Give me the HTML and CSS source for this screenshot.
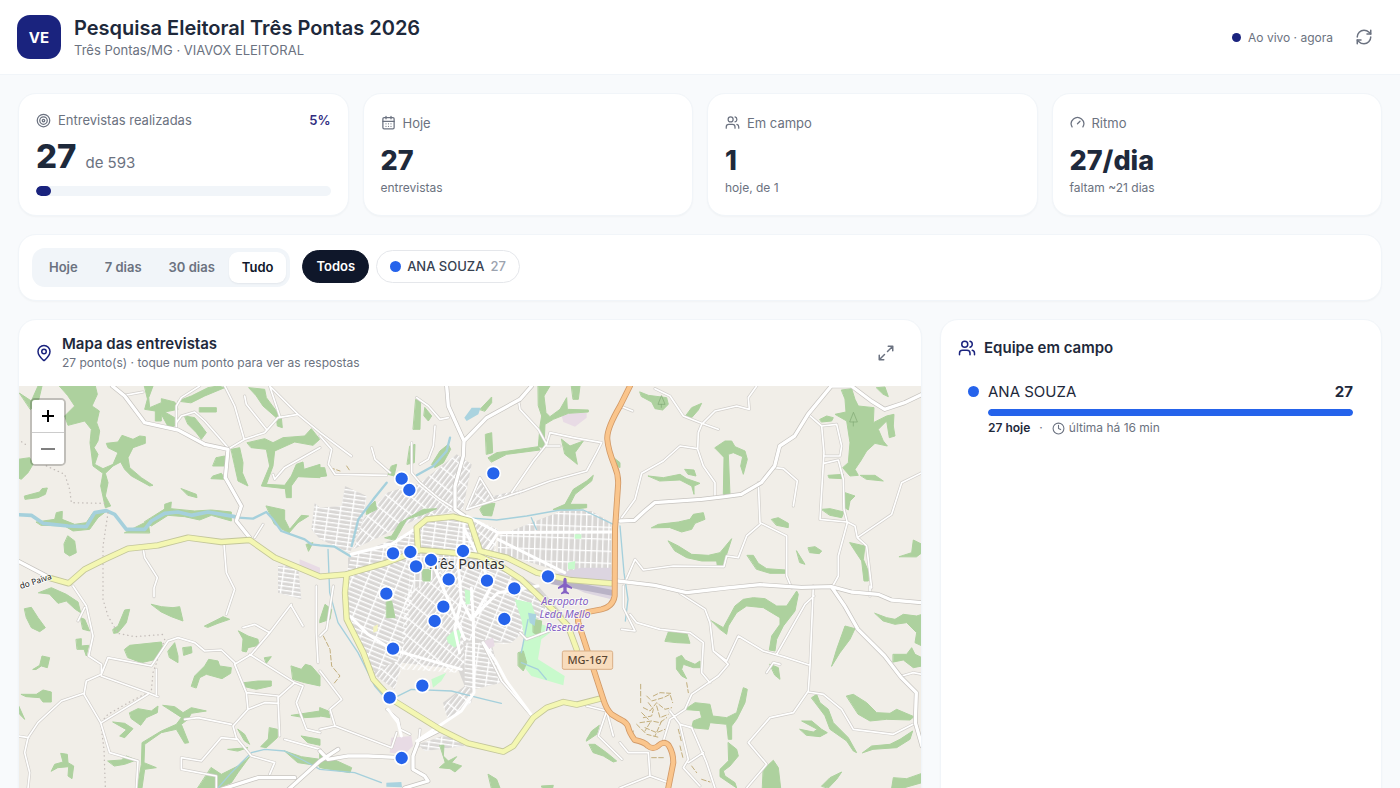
FILE: index.html
```html
<!DOCTYPE html>
<html lang="pt-BR">
<head>
<meta charset="utf-8">
<meta name="viewport" content="width=device-width, initial-scale=1">
<title>Pesquisa Eleitoral Três Pontas 2026</title>
<link rel="stylesheet" href="styles.css">
</head>
<body>
<svg class="sprite" aria-hidden="true">
  <symbol id="i-target" viewBox="0 0 24 24"><circle cx="12" cy="12" r="10"/><circle cx="12" cy="12" r="6"/><circle cx="12" cy="12" r="2"/></symbol>
  <symbol id="i-calendar" viewBox="0 0 24 24"><path d="M8 2v4M16 2v4M3 10h18"/><rect x="3" y="4" width="18" height="18" rx="2"/><path d="M8 14h.01M12 14h.01M16 14h.01M8 18h.01M12 18h.01M16 18h.01"/></symbol>
  <symbol id="i-users" viewBox="0 0 24 24"><path d="M16 21v-2a4 4 0 0 0-4-4H6a4 4 0 0 0-4 4v2"/><circle cx="9" cy="7" r="4"/><path d="M22 21v-2a4 4 0 0 0-3-3.87M16 3.13a4 4 0 0 1 0 7.75"/></symbol>
  <symbol id="i-gauge" viewBox="0 0 24 24"><path d="m12 14 4-4M3.34 19a10 10 0 1 1 17.32 0"/></symbol>
  <symbol id="i-refresh" viewBox="0 0 24 24"><path d="M3 12a9 9 0 0 1 9-9 9.75 9.75 0 0 1 6.74 2.74L21 8"/><path d="M21 3v5h-5"/><path d="M21 12a9 9 0 0 1-9 9 9.75 9.75 0 0 1-6.74-2.74L3 16"/><path d="M8 16H3v5"/></symbol>
  <symbol id="i-pin" viewBox="0 0 24 24"><path d="M20 10c0 4.993-5.539 10.193-7.399 11.799a1 1 0 0 1-1.202 0C9.539 20.193 4 14.993 4 10a8 8 0 0 1 16 0"/><circle cx="12" cy="10" r="3"/></symbol>
  <symbol id="i-expand" viewBox="0 0 24 24"><path d="M15 3h6v6M21 3l-7 7M3 21l7-7M9 21H3v-6"/></symbol>
  <symbol id="i-clock" viewBox="0 0 24 24"><circle cx="12" cy="12" r="10"/><path d="M12 6v6l4 2"/></symbol>
  <symbol id="i-plus" viewBox="0 0 14 14"><path d="M7 1v12M1 7h12"/></symbol>
  <symbol id="i-minus" viewBox="0 0 14 14"><path d="M0 7h14"/></symbol>
</svg>

<header class="topbar">
  <div class="logo">VE</div>
  <div class="heading">
    <h1>Pesquisa Eleitoral Três Pontas 2026</h1>
    <p>Três Pontas/MG · VIAVOX ELEITORAL</p>
  </div>
  <div class="live"><span class="dot dot-live"></span>Ao vivo · agora</div>
  <button class="icon-button" type="button" aria-label="Atualizar"><svg class="icon icon-md"><use href="#i-refresh"/></svg></button>
</header>

<main class="content">
  <section class="stats">
    <article class="card stat stat-main">
      <div class="stat-label"><svg class="icon"><use href="#i-target"/></svg>Entrevistas realizadas<strong class="percent">5%</strong></div>
      <div class="stat-total"><strong>27</strong><span>de 593</span></div>
      <div class="progress"><div class="progress-fill" style="width:5%"></div></div>
    </article>
    <article class="card stat">
      <div class="stat-label"><svg class="icon"><use href="#i-calendar"/></svg>Hoje</div>
      <strong class="stat-value">27</strong>
      <span class="stat-note">entrevistas</span>
    </article>
    <article class="card stat">
      <div class="stat-label"><svg class="icon"><use href="#i-users"/></svg>Em campo</div>
      <strong class="stat-value">1</strong>
      <span class="stat-note">hoje, de 1</span>
    </article>
    <article class="card stat">
      <div class="stat-label"><svg class="icon"><use href="#i-gauge"/></svg>Ritmo</div>
      <strong class="stat-value">27/dia</strong>
      <span class="stat-note">faltam ~21 dias</span>
    </article>
  </section>

  <section class="card filters">
    <div class="segment">
      <button type="button">Hoje</button>
      <button type="button">7 dias</button>
      <button type="button">30 dias</button>
      <button type="button" class="is-active" aria-pressed="true">Tudo</button>
    </div>
    <div class="chips">
      <button type="button" class="chip is-active" aria-pressed="true">Todos</button>
      <button type="button" class="chip"><span class="dot dot-person"></span>ANA SOUZA<span class="chip-count">27</span></button>
    </div>
  </section>

  <div class="panels">
    <section class="card map-card">
      <div class="map-head">
        <svg class="icon icon-brand icon-pin"><use href="#i-pin"/></svg>
        <div class="map-title">
          <h2>Mapa das entrevistas</h2>
          <p>27 ponto(s) · toque num ponto para ver as respostas</p>
        </div>
        <button class="icon-button" type="button" aria-label="Expandir mapa"><svg class="icon icon-md"><use href="#i-expand"/></svg></button>
      </div>
      <div class="map">
        <svg class="map-canvas" viewBox="0 0 2712 1400" role="img" aria-label="Mapa de Três Pontas">
          <defs>
            <pattern id="grid-a" width="42" height="13" patternUnits="userSpaceOnUse" patternTransform="rotate(-52)"><path d="M0 0H42M0 0V13" class="street"/></pattern>
            <pattern id="grid-b" width="44" height="14" patternUnits="userSpaceOnUse" patternTransform="rotate(22)"><path d="M0 0H44M0 0V14" class="street"/></pattern>
            <pattern id="grid-c" width="17" height="36" patternUnits="userSpaceOnUse" patternTransform="rotate(2)"><path d="M0 0H17M0 0V36" class="street"/></pattern>
            <pattern id="grid-d" width="36" height="13" patternUnits="userSpaceOnUse" patternTransform="rotate(8)"><path d="M0 0H36M0 0V13" class="street"/></pattern>
            <g id="minor">
              <path d="M320 28L375 18M475 125V60L490 35 545 0M475 110L490 90 530 78 560 105 630 185M620 0L650 60 678 158M630 190L680 160 740 140 780 95 840 85 906 140 1000 210M680 30L685 55 745 130M755 0L785 90M755 0L840 85M765 265L770 280 800 245 906 185M735 415L710 455M375 485L380 515 418 575 408 606V632M618 475L625 560 650 610 625 685"/>
              <g transform="translate(906 0)"><path d="M290 35L325 60 360 100 385 95M345 120L340 180 325 220 300 235M275 170V260L300 290 360 340 440 390M155 185L165 220 210 260M0 150L35 190 25 235 45 265 200 268M595 40L600 70 655 130 680 175 640 225 575 320M680 175L690 140 760 155 845 170 830 200 800 255 690 285 610 315 440 370M680 180H720M440 370L480 275 520 340"/></g>
              <g transform="translate(1806 0)"><path d="M105 8L150 30 190 90 245 112M245 115L285 75 350 60 388 70 385 35 410 0M245 112L295 130M245 115L235 140 233 190 250 240 285 290 285 330M233 188L180 180 130 225 65 262 45 340 5 395M0 60L38 75M565 85L605 120 612 200 600 400 680 408M605 120L650 115 665 180 660 210 615 210M612 232L655 222 670 280 672 370 682 410 655 510 655 570 635 606M465 245L490 248 532 285 520 360M415 290L420 410 500 450V570L515 606M420 415L380 450 355 515 320 510 312 542 160 540 70 552 45 520 15 590M682 408L705 420 712 455 740 480 755 606M712 455L815 385 845 290 906 260"/></g>
              <g transform="translate(0 600)"><path d="M165 0L205 60 225 150 212 210 250 235 250 265 205 285 198 325 248 410 275 500 360 525 355 606M200 65L180 105M250 265L270 215 400 240 450 165 480 155 530 170 560 195 610 192 650 230M250 270L390 320 420 332M415 250V325M198 322L130 345 60 410 30 455 20 500 35 560 30 606M0 450L32 455M250 410L390 325M820 55L755 140 700 205 650 235 685 320 690 370 645 420 655 455 700 510 770 530 755 565M755 140L710 115 675 125M820 60L855 120M695 205L830 290 780 335 785 450M685 320L780 330M690 370L740 350 782 352M830 290L855 300 835 350 865 430 906 440M640 415L540 395 500 400M660 460L610 455 550 525 490 515 490 550 595 570 595 606M895 0V140L900 230M800 460L906 490"/></g>
              <g transform="translate(906 600)"><path d="M0 255L65 340 30 370 45 420 215 485 230 440M0 430L45 420M200 370L235 400 240 430 270 445M300 430L295 480M490 175L545 285 640 395M600 140L620 160 700 130M800 360L860 375 835 450 906 520M860 375L880 450M40 0L20 130 0 150"/></g>
              <g transform="translate(1806 600)"><path d="M30 85L50 110 120 130 210 140 250 170 245 260 270 290M180 22L255 70 270 110 280 195 325 235 295 270 215 325 195 370 150 400 130 465M280 195L320 225 355 150 430 195 490 212 570 238M580 0L570 240 565 315 520 380 450 395 385 470 440 535 380 606M470 205L555 55 582 30M440 260L460 230 480 235M565 318L610 325 665 370 700 430 820 445 885 412M845 270L880 260 906 265M150 375L180 415 215 425 260 530 285 606M180 415L205 520 190 545 240 600M205 530L250 500M0 470L25 500 85 500 90 570 0 606M90 570L145 590M10 0V65L45 135 5 130M750 0V30"/></g>
            </g>
            <g id="roads">
              <path d="M283 0L320 30 380 110 480 132 560 175 630 190 622 275 670 360 655 405 695 455M0 525L95 575"/>
              <path d="M1286 0L1291 60 1338 165 1336 210 1311 300 1311 370 1346 395M1338 165L1406 95 1506 40 1541 0"/>
              <path d="M1806 405L1850 403 1880 375 1910 350 2050 340 2120 332 2170 325 2230 290 2270 240 2285 180 2330 150 2370 85 2440 0H2500L2560 45 2600 70 2660 50 2712 25"/>
              <path d="M1800 585L1910 598 2006 620 2126 606 2226 596 2350 604 2440 602 2500 618 2580 625 2620 642 2712 650M2440 602L2480 660 2520 730 2600 810 2650 875 2695 920 2692 1010 2712 1080"/>
              <path d="M610 1210L720 1175 830 1175M812 1210L906 1125 960 1090M906 1095L930 1120 990 1110 1050 1110 1150 1115M1200 1070L1185 1110 1185 1150 1220 1170 1230 1185 1160 1206M1200 1065L1270 1030"/>
            </g>
            <g id="avenues">
              <path d="M1346 390L1440 440 1780 438M1360 606L1366 700 1368 920 1330 975 1196 1065M1338 395V470L1320 530 1330 640 1360 700M996 690L1050 745 1120 790 1330 850M1395 770L1430 820 1465 885 1546 995M1000 505L1120 475 1190 430M1340 430L1380 510 1420 600 1370 690M1440 440L1400 500M1440 460L1640 560M1110 970L1140 1010 1150 1050M1230 500L1290 640 1340 760M1330 640L1310 730 1325 800M1400 500L1440 440M1370 690L1440 620 1560 600"/>
            </g>
            <g id="secondary">
              <path d="M92 575L152 592 200 550 260 520 330 488 420 478 510 455 610 468 695 462 770 515 906 572 986 565 1106 530 1206 492 1300 500 1380 510 1440 535 1510 580 1606 672 1650 720 1676 790"/>
              <path d="M1200 492L1196 425 1226 400 1306 392 1356 405 1386 495 1466 515 1556 560 1656 582 1780 592M986 565L981 620 986 700 1036 800 1066 880 1121 940 1266 1030 1350 1072 1456 1097 1486 1080 1546 995 1586 965 1636 948 1676 956 1746 938"/>
            </g>
            <g id="trunk">
              <path d="M1836 0L1806 60Q1765 130 1768 160 1770 190 1790 240 1803 270 1800 300L1791 430 1790 630Q1785 662 1750 670L1700 680Q1676 685 1681 710L1756 940Q1765 970 1781 985L1806 1000Q1828 1010 1831 1025T1850 1062Q1880 1068 1890 1080 1905 1092 1920 1080 1938 1062 1952 1078 1966 1100 1966 1130L1950 1210"/>
            </g>
          </defs>

          <rect class="land" width="2712" height="1400"/>

          <g class="built">
            <path d="M1206 290L1316 205 1361 235 1335 370 1196 400 1006 490 1036 400 1106 320z"/>
            <path d="M906 365L970 360 981 300 1046 330 1036 400 996 500 906 460 880 430 890 350z"/>
            <path d="M990 515L1200 430 1226 400 1330 390 1440 430 1420 520 1560 600 1640 690 1560 700 1480 770 1420 770 1450 890 1370 910 1360 950 1290 1000 1275 950 1340 900 1320 850 1150 830 1130 910 1060 860 990 720z"/>
            <path d="M1440 450L1630 375 1720 375 1780 410V585L1640 560 1440 500z"/>
            <path d="M1350 350L1386 275 1426 330 1516 308V322L1386 360 1350 375z"/>
            <path d="M780 540L840 540 850 640 780 620z"/>
            <path d="M1200 1075L1290 1045 1340 1080 1220 1095z"/>
          </g>
          <path fill="url(#grid-a)" d="M1206 290L1316 205 1361 235 1335 370 1196 400 1006 490 1036 400 1106 320zM1350 350L1386 275 1426 330 1516 308V322L1386 360 1350 375zM1060 860L1150 820 1330 840 1320 860 1150 850 1130 910zM1160 630L1320 520 1340 840 1150 820zM1275 960L1340 900 1360 910V950L1290 1000zM1350 390L1440 430 1430 520 1370 500z"/>
          <path fill="url(#grid-b)" d="M985 565L1200 500 1180 640 1150 820 1060 860 990 720zM1320 520L1430 520 1640 690 1560 700 1480 770 1370 760 1330 770z"/>
          <path fill="url(#grid-d)" d="M906 365L970 360 981 300 1046 330 1036 400 996 500 906 460 880 430 890 350zM1000 510L1200 430V500L985 560zM1210 425L1226 400 1350 390 1370 510 1200 490zM780 540H840L850 640 780 620zM1340 770L1480 770 1420 780 1450 890 1370 910 1340 900zM1200 1075L1290 1045 1340 1080 1220 1095z"/>
          <path fill="url(#grid-c)" d="M1440 450L1630 375 1720 375 1780 410V585L1640 560 1440 500zM1180 500L1320 510 1320 530 1170 630z"/>

          <path class="pink" d="M1631 90L1646 82 1706 80 1706 95 1671 122 1636 108zM1120 1055L1180 1050 1185 1080 1160 1105 1115 1100zM1400 765L1425 755 1430 780 1410 790zM845 520L906 545V580L845 540z"/>
          <path class="apron" d="M1590 570L1690 545 1780 545V640L1700 620z"/>
          <path class="runway" d="M1600 585L1780 620"/>
          <path class="park" d="M1490 640L1540 650 1560 710 1610 730 1570 760 1560 820 1640 870 1636 898 1540 870 1500 820 1520 760 1510 700zM1285 755L1305 735 1330 730 1325 770 1310 785 1290 770zM1340 610L1358 615 1355 655 1343 655zM1240 880L1285 860 1270 885 1245 905zM1650 530L1672 525 1670 550 1650 550zM1670 445H1690V458H1670z"/>
          <path class="sand" d="M1066 722L1080 715 1078 735 1066 740z"/>

          <g class="wood">
            <path d="M125 0H232L238 25 222 60 244 75 236 110 245 135 240 165 228 185 240 205 230 235 255 248 285 235 300 200 270 185 265 172 300 168 312 148 345 160 365 150 382 152V172L345 185 330 215 335 245 370 275 405 298 395 300 340 270 320 250 308 228 285 240 262 262 270 290 262 330 278 360 262 365 248 300 255 262 225 240 216 170 220 130 200 105 150 118 140 90 170 60 150 30zM5 22L40 45 60 0H72L60 50 38 70zM0 220L35 215 45 235 30 260 10 280 0 275zM20 330L65 318 72 308 88 306 82 325 60 335 22 340zM490 308L535 325 537 335 510 328zM150 450L170 465 175 500 155 510 140 500 138 475z"/>
            <path d="M55 408L110 400 115 380 133 376 132 400 170 415 205 410 225 380 245 375 262 378 240 395 215 430 165 435 140 420 70 418zM320 440L350 425 390 405 395 440zM440 368V355L460 348 458 368 530 375 580 372 640 378V405L580 388 545 402 500 392 450 388 400 420 380 408zM380 0H405L392 35 395 65 430 50 430 38 470 48 480 70 440 78 470 95V120L452 125 430 85 430 105 412 105V75L380 70 388 40zM480 45L520 30 570 5 600 0 620 5 560 30 520 50zM545 65H595V78H545zM500 90L530 95 550 120 565 140 550 160 535 140 510 115zM693 5L740 10 745 35 790 95 793 125 778 120 775 95 735 60 715 30z"/>
            <path d="M640 190L665 185 675 230 673 260 690 300 660 285 650 240zM595 215L620 210 622 240 585 240zM585 270L610 262 622 280 580 278zM688 170L740 158 765 170 795 155 860 150 880 128 905 160 885 178 830 168 770 195 765 240 745 295 800 298 820 270 835 235 855 228 858 250 906 235V275L840 272 820 300V335L805 335 802 308 730 300 755 240 745 190 700 185zM745 360L800 372V400L815 430 850 388 872 390 840 410 812 442 770 415zM906 245H920L926 270 906 272zM865 475L885 470 872 495z"/>
            <g transform="translate(906 0)"><path d="M288 40H302L300 130 280 130zM315 65L335 90 325 105 312 90zM270 180L285 175 283 230 262 235zM335 235L360 195 385 175 392 190 370 230 345 245zM480 70L515 33V50L495 75zM497 145L515 140 518 200 500 205zM505 215L530 200 600 190 655 182 660 192 560 205 515 228zM655 0H690L672 30 678 80 690 92 720 70 740 35 742 70 805 72V78L745 82 700 100 675 115 672 185 655 182 660 120 665 90 655 60zM755 0H780L775 40 760 40zM725 160L750 180 790 165 765 200 772 235 735 205zM875 210L900 230V245L880 235zM700 370L735 355 760 310 800 285 820 268 815 285 765 325 750 355 800 355V365L740 372zM480 370L490 355 525 352 515 390 490 388zM215 240L230 235 222 270 205 265zM195 455L215 450 240 410 310 370 350 368 310 385 260 400 235 445 225 462zM140 370L165 345 170 370 140 385zM307 550H332L330 585H310z"/></g>
            <g transform="translate(1806 0)"><path d="M60 18L85 28 140 35 145 55 128 72 105 68 95 48 65 32zM195 92L215 65 245 52 235 72 215 95zM285 185L315 165H335L345 182 375 195 382 220 370 265 362 240 368 212 340 200 325 205 330 325H310L312 215zM85 270L130 275 180 265 200 278 240 292 222 300V325L215 300 180 282 120 285zM195 250L222 252 228 270 205 265zM95 425L115 415 175 408 210 400 220 385 250 380 255 400 225 412 215 430 185 438 150 425zM145 465L175 480 215 505 265 508 300 500 335 458 325 490 308 540 292 540 290 525 245 525 200 515 165 495zM382 508H400L415 532 440 548 497 552V562L450 562 410 550zM455 400L475 395 505 412V425L470 418zM530 495L555 535 540 530zM565 485L585 482 605 495 598 503 570 500zM600 100L620 90 640 95 635 105 605 108zM665 12L695 8 705 40 715 60 762 65 760 110 800 90 822 85 820 120 825 150 808 155 800 105 775 130 790 165 802 180 765 172 740 195 722 225 705 250 715 268 690 270 668 245 685 230 690 170 680 105 645 85 678 78 675 40zM625 268L670 265 668 278 628 276zM722 268L765 268 790 285 740 280zM770 5L795 3 805 32 790 25zM605 370L630 368 672 378 665 395 630 388zM675 320L705 330 690 345 685 372 675 365zM690 470L735 480 730 520 745 555V585H732L725 525 705 495zM838 512L875 500 880 462 906 475V500L890 512z"/></g>
            <g transform="translate(0 600)"><path d="M62 20L100 5 145 25 180 48 188 80 172 70 145 45 120 52 95 25zM20 68L40 64 60 95 82 125 65 137 40 125 25 95zM188 95L200 100 215 135 195 130zM175 160L190 158V180L212 178 205 210 198 190 178 190zM285 130L300 120 320 72 335 70 325 110 300 140 288 142zM400 55L430 62 465 65 485 62 495 105 460 92 430 78zM560 120L600 100 615 92 635 100 600 112 570 124zM662 135L690 150 720 160 722 178 690 185 685 198 672 195 675 160zM320 190L335 178 430 168 435 190 415 220 370 230 330 215zM450 195L470 170 480 210 480 230 455 215zM495 185L520 182 522 200 498 208zM520 300L530 270 560 240 572 220 600 225 605 240 640 245 638 262 612 278 565 265 545 275 535 305zM740 215L760 212 745 232zM45 250L65 238 72 210 95 215 88 245 70 240 55 250zM10 325L55 325 75 312 100 318V348L75 348 65 335 25 332zM335 380L360 368 400 375 420 360 418 380 385 395 368 418 340 398z"/><path d="M285 408L320 412 345 428 320 455 305 450 325 432zM435 358L470 362 495 380 520 365 565 375 520 382 510 400 490 415 512 470 500 472 475 430 430 440 380 475 378 530 415 545 380 550 372 606 358 606 370 535 372 470 430 435 475 415 490 395zM270 525L310 522 325 510 355 522 320 535 290 540zM100 555L110 535 135 528 128 502 148 505 150 530 167 540 162 578 150 570 152 542 120 545zM660 430L680 445 695 475 680 465zM630 490L690 485 660 495zM755 425L778 430V455L745 485 728 482 750 460zM678 290L720 285 760 285V300L715 310 680 302zM820 240L850 250 862 235 880 240 906 270V300L860 290 825 280zM820 388L906 375V392L860 395zM850 450L906 460V478L870 470zM800 495L850 512 906 520V540L840 530zM580 545L610 565 660 540 695 512 660 560 640 590 600 606 540 606zM0 355L20 400 5 385z"/></g>
            <g transform="translate(906 600)"><path d="M0 100L15 55 35 70 30 100 0 110zM200 45L215 45 225 95H200zM0 365L25 375 30 395 0 390zM0 500L40 520 95 545 90 560 0 545zM360 478L372 478 370 510 385 525 410 512 395 530 425 540 405 558 390 548 358 545 375 530zM505 565L530 580 540 606 515 606zM595 200L610 195 620 230 610 255 595 240zM640 100L665 105 660 150 640 140zM800 460L815 435 838 418 830 445 800 465zM808 475L825 475 860 500 890 525 880 528 850 510 820 500zM665 600L700 598 698 606 668 606z"/></g>
            <g transform="translate(1806 600)"><path d="M135 165L145 138 200 140 210 172 170 170zM275 105L310 125 345 60 370 40 400 35 435 38 470 60 500 60 530 15 535 25 525 75 490 120 470 160 465 195 448 192 455 150 480 115 480 95 430 65 380 60 350 80 325 120 320 145 300 130zM170 215L185 208 195 222 225 235 240 225 240 245 220 245 190 235 185 250 200 278 185 270 170 250zM195 370L225 350 270 355 278 390 320 395 350 380 370 305 382 310 375 350 350 400 335 420 335 460 325 460 320 415 270 410 265 430 215 425 220 405 245 395 240 375zM325 470L350 490 355 510 330 540 310 555 315 570 345 590 350 606 300 572 300 550 325 525zM430 550L460 523 475 545 482 606H428zM605 600L630 575 665 558 650 580 625 606zM635 240L650 190 675 120 705 128 690 160 675 180 660 200zM765 82L800 95 825 100 850 85 890 90 906 85V180L885 170 890 140 860 110 825 115 790 105zM820 205L860 205 875 185 885 205 906 215V240L880 245 850 222 820 228zM575 335L590 325 600 350 625 370 640 410 685 455 710 500 700 495 680 465 630 430 615 390zM680 330L700 325 740 350 770 380 810 382 830 370 882 392 870 402 800 400 750 405 715 385zM450 235L475 245 480 280 465 268zM540 430L580 438 592 430 545 405 575 405 605 430 622 440 600 452 560 448zM728 500L755 480 810 475 840 460 878 435 870 460 830 485 760 490zM815 606L820 575 860 578 906 562V590L850 606z"/></g>
          </g>

          <g class="water">
            <path class="river" d="M0 386L40 388 75 412 150 420 205 422 230 380 265 374 290 385 325 430 380 430 400 405 440 382 480 378 520 388 570 378 650 392"/>
            <path class="brook" d="M650 394L705 398 745 378 765 400 790 435 860 460 880 475 906 478 950 482 996 510M1296 155L1286 195 1246 240 1196 268M1106 290L1066 340 1021 400 1001 480"/>
            <path class="stream" d="M1346 395L1436 402 1526 390 1626 372 1696 372 1786 415M1540 395L1555 430M930 490L935 620 960 710 1020 800 1070 900 1100 935 1130 935 1180 910 1300 915 1400 940 1450 952M1806 420L1818 560 1830 640 1822 705M600 1206L640 1160 700 1100 740 1090 800 1095 860 1125 906 1150 1010 1160 1090 1190M1510 830L1560 850 1585 880M1530 700L1520 750 1510 800"/>
            <path class="pond" d="M1339 95L1361 65 1388 65 1381 85 1346 105zM1530 680L1555 685 1550 720 1535 710zM1105 1190L1150 1188 1152 1204 1105 1202z"/>
          </g>

          <g class="trail">
            <path d="M0 160L22 175M85 240L140 265 155 310 160 350 265 352M270 380L255 480V640L270 690 300 742 350 752 440 745M440 760L405 860 400 915 340 945 270 985 248 1010 258 1090 262 1206"/>
          </g>
          <g class="track">
            <path d="M30 245L60 255M80 240L90 255M100 268H200" transform="translate(906 0)"/>
            <path d="M10 150L30 190 35 240 60 270 40 295" transform="translate(906 600)"/>
            <path transform="translate(1806 600)" d="M62 295V350M80 330L95 345 130 335 150 325 158 350M70 365L90 375 110 350 135 370 155 365M85 350L100 370 95 390 70 395M110 360L120 395 145 385M60 410L95 405 120 410 140 395M75 425L110 440 135 430M50 415L80 445 120 455M90 410L75 435M125 405L105 450M100 330L120 320 152 322M65 380L85 400M200 290L205 320M175 430L185 470M180 480L190 520M95 515H135M215 540L230 560M245 580L270 588M40 435L35 450"/>
          </g>

          <use href="#minor" class="minor-case"/><use href="#minor" class="minor-fill"/>
          <use href="#roads" class="road-case"/><use href="#roads" class="road-fill"/>
          <use href="#avenues" class="avenue-fill"/>
          <use href="#secondary" class="secondary-case"/><use href="#secondary" class="secondary-fill"/>
          <use href="#trunk" class="trunk-case"/><use href="#trunk" class="trunk-fill"/>

          <path class="tree" d="M1930 30L1920 55H1940zM1930 55V64M2506 80L2495 108H2517zM2506 108V120"/>
          <path class="plane" d="M1641 575q5 0 5 10v8l16 11v5l-16-5v11l7 6v4l-12-3-12 3v-4l7-6v-11l-16 5v-5l16-11v-8q0-10 5-10z"/>
          <text class="label-road" transform="translate(8 609) rotate(-18)">do Paiva</text>
          <text class="label-town" x="1343" y="549">Três Pontas</text>
          <text class="label-air"><tspan x="1641" y="656">Aeroporto</tspan><tspan x="1641" y="695">Leda Mello</tspan><tspan x="1641" y="734">Resende</tspan></text>
          <rect class="shield" x="1633" y="795" width="151" height="55" rx="5"/>
          <text class="label-shield" x="1709" y="834">MG-167</text>

          <g class="pins">
            <circle cx="1151" cy="278" r="21"/><circle cx="1174" cy="312" r="21"/><circle cx="1426" cy="262" r="21"/>
            <circle cx="1125" cy="502" r="21"/><circle cx="1177" cy="498" r="21"/><circle cx="1194" cy="541" r="21"/>
            <circle cx="1239" cy="522" r="21"/><circle cx="1335" cy="495" r="21"/><circle cx="1292" cy="580" r="21"/>
            <circle cx="1407" cy="584" r="21"/><circle cx="1489" cy="607" r="21"/><circle cx="1590" cy="571" r="21"/>
            <circle cx="1105" cy="623" r="21"/><circle cx="1276" cy="662" r="21"/><circle cx="1250" cy="705" r="21"/>
            <circle cx="1459" cy="699" r="21"/><circle cx="1125" cy="788" r="21"/><circle cx="1213" cy="899" r="21"/>
            <circle cx="1115" cy="935" r="21"/><circle cx="1151" cy="1116" r="21"/>
          </g>
        </svg>
        <div class="zoom">
          <button type="button" aria-label="Aproximar"><svg class="zoom-plus"><use href="#i-plus"/></svg></button>
          <button type="button" aria-label="Afastar"><svg class="zoom-minus"><use href="#i-minus"/></svg></button>
        </div>
      </div>
    </section>

    <aside class="card team">
      <h2><svg class="icon icon-brand icon-team"><use href="#i-users"/></svg>Equipe em campo</h2>
      <div class="member">
        <span class="dot dot-person"></span>
        <div class="member-body">
          <div class="member-row"><span>ANA SOUZA</span><strong>27</strong></div>
          <div class="member-bar"><div class="member-fill" style="width:100%"></div></div>
          <div class="member-meta"><strong>27 hoje</strong><span>·</span><span class="last"><svg class="icon icon-sm"><use href="#i-clock"/></svg>última há 16 min</span></div>
        </div>
      </div>
    </aside>
  </div>
</main>
</body>
</html>
```
FILE: styles.css
```css
* { box-sizing: border-box; }
body {
  margin: 0;
  height: 100vh;
  display: flex;
  flex-direction: column;
  background: #f8fafc;
  color: #1e293b;
  font-family: Inter, "Liberation Sans", sans-serif;
  font-size: 13px;
}
h1, h2, p { margin: 0; }
button { font: inherit; color: inherit; border: 0; padding: 0; background: none; cursor: pointer; }
.sprite { display: none; }
.icon { width: 15px; height: 15px; flex: none; fill: none; stroke: currentColor; stroke-width: 2; stroke-linecap: round; stroke-linejoin: round; }
.icon-sm { width: 13px; height: 13px; }
.icon-md { width: 18px; height: 18px; }
.icon-pin, .icon-team { width: 18px; height: 18px; }
.icon-brand { color: #1a237e; }
.dot { flex: none; border-radius: 50%; }
.dot-live { width: 9px; height: 9px; background: #1a237e; }
.dot-person { width: 11px; height: 11px; background: #2563eb; }
.card { background: #fff; border: 1px solid #f1f5f9; border-radius: 18px; box-shadow: 0 1px 2px rgba(15, 23, 42, 0.03); }

.topbar { flex: none; display: flex; align-items: center; padding: 15px 18px 15px 17px; background: #fff; border-bottom: 1px solid #f1f5f9; }
.logo { width: 44px; height: 44px; display: grid; place-items: center; border-radius: 13px; background: #1a237e; color: #fff; font-size: 15px; font-weight: 700; }
.heading { flex: 1; margin-left: 13px; }
.heading h1 { font-size: 20px; line-height: 26px; font-weight: 600; }
.heading p { line-height: 18px; color: #6b7280; }
.heading h1, .heading p { position: static; }
.live { display: flex; align-items: center; gap: 7px; margin-right: 13px; font-size: 12px; color: #6b7280; }
.icon-button { width: 36px; height: 36px; display: grid; place-items: center; color: #6b7280; }

.content { flex: 1; min-height: 0; overflow: auto; scrollbar-width: none; display: flex; flex-direction: column; gap: 18px; padding: 18px; }
.content > * { flex: none; }
.stats { display: grid; grid-template-columns: repeat(4, 1fr); gap: 14px; }
.stat { display: flex; flex-direction: column; justify-content: center; height: 123px; padding: 0 17px; }
.stat-main { padding-bottom: 3px; }
.stat-label { display: flex; align-items: center; gap: 7px; line-height: 20px; color: #6b7280; }
.percent { margin-left: auto; color: #312e81; font-weight: 600; }
.stat-total { display: flex; align-items: baseline; gap: 9px; margin: 4px 0 8px; }
.stat-total strong { font-size: 33px; line-height: 44px; font-weight: 800; }
.stat-total span { font-size: 15px; line-height: 20px; color: #6b7280; }
.progress { height: 10px; border-radius: 5px; background: #f1f5f9; overflow: hidden; }
.progress-fill { height: 100%; border-radius: 5px; background: #1a237e; }
.stat-value { margin-top: 10px; font-size: 27px; line-height: 36px; font-weight: 800; }
.stat-note { font-size: 12px; line-height: 18px; color: #6b7280; }

.filters { display: flex; align-items: center; gap: 12px; padding: 13px; }
.segment { display: flex; gap: 1px; padding: 4px; border-radius: 13px; background: #f1f5f9; }
.segment button { padding: 6px 13px; border-radius: 9px; line-height: 19px; font-weight: 600; color: #6b7280; }
.segment .is-active { background: #fff; color: #0f172a; box-shadow: 0 1px 2px rgba(15, 23, 42, 0.06); }
.chips { display: flex; gap: 7px; padding-bottom: 3px; }
.chip { display: flex; align-items: center; gap: 6px; height: 33px; padding: 0 13px; border: 1px solid #e5e7eb; border-radius: 17px; font-weight: 500; color: #374151; }
.chip.is-active { background: #0f172a; border-color: #0f172a; color: #fff; font-weight: 600; }
.chip-count { color: #9ca3af; }

.panels { display: grid; grid-template-columns: minmax(0, 1fr) 442px; gap: 18px; }
.map-card { overflow: hidden; }
.map-head { display: flex; align-items: center; gap: 9px; height: 66px; padding: 0 17px 0 16px; }
.map-title { flex: 1; }
h2 { font-size: 15px; line-height: 20px; font-weight: 600; }
.map-title p { font-size: 12px; line-height: 18px; color: #6b7280; }
.map { position: relative; margin: 0 -1px; }
.map-canvas { display: block; width: 100%; height: auto; }
.zoom { position: absolute; left: 12px; top: 12px; border: 2px solid rgba(0, 0, 0, 0.2); border-radius: 5px; background-clip: padding-box; overflow: hidden; }
.zoom button { display: grid; place-items: center; width: 32px; height: 32px; background: #fff; color: #000; }
.zoom button + button { border-top: 1px solid #ccc; }
.zoom svg { width: 14px; height: 14px; stroke: #000; }
.zoom-plus { stroke-width: 2; }
.zoom-minus { stroke-width: 1; }

.team { padding: 18px 18px 18px 17px; }
.team h2 { display: flex; align-items: center; gap: 8px; }
.member { display: flex; gap: 9px; padding: 23px 10px 0; }
.member .dot { margin-top: 5px; }
.member-body { flex: 1; }
.member-row { display: flex; justify-content: space-between; font-size: 15px; line-height: 22px; }
.member-row strong { font-weight: 700; }
.member-bar { height: 7px; margin-top: 6px; border-radius: 4px; background: #f1f5f9; overflow: hidden; }
.member-fill { height: 100%; border-radius: 4px; background: #2563eb; }
.member-meta { display: flex; align-items: center; gap: 9px; margin-top: 3px; font-size: 12px; line-height: 18px; color: #6b7280; }
.member-meta strong { font-weight: 600; color: #1e293b; }
.last { display: flex; align-items: center; gap: 4px; }

/* Map drawing, in map units */
.map-canvas path, .map-canvas use { stroke-linecap: round; stroke-linejoin: round; }
.land { fill: #f1eee8; }
.built { fill: #d9d7d5; }
.street { fill: none; stroke: #fff; stroke-width: 8; }
.pink { fill: #e8dbe5; }
.apron { fill: #dcd5e0; }
.runway { fill: none; stroke: #b9b3c6; stroke-width: 18; }
.park { fill: #c8facc; }
.sand { fill: #f3f3c0; }
.wood { fill: #add19e; stroke: #add19e; stroke-width: 3; }
.water path { fill: none; stroke: #a5d0dc; }
.water .river { stroke-width: 11; }
.water .brook { stroke-width: 7; }
.water .stream { stroke-width: 4; }
.water .pond { fill: #aad3df; stroke: none; }
.trail { fill: none; stroke: #c3bcb8; stroke-width: 4; stroke-dasharray: 1 12; }
.track { fill: none; stroke: #c2ae7c; stroke-width: 3; stroke-dasharray: 14 7; }
.minor-case { fill: none; stroke: #d2cfcb; stroke-width: 9; }
.minor-fill { fill: none; stroke: #fff; stroke-width: 5; }
.road-case { fill: none; stroke: #c6c3bf; stroke-width: 14; }
.road-fill { fill: none; stroke: #fff; stroke-width: 10; }
.avenue-fill { fill: none; stroke: #fff; stroke-width: 9; }
.secondary-case { fill: none; stroke: #c3c69a; stroke-width: 19; }
.secondary-fill { fill: none; stroke: #f4f7b2; stroke-width: 14; }
.trunk-case { fill: none; stroke: #d29a68; stroke-width: 18; }
.trunk-fill { fill: none; stroke: #fac58c; stroke-width: 13; }
.tree { fill: none; stroke: #7fa872; stroke-width: 2; }
.plane { fill: #8461c4; }
.map-canvas text { font-family: "Noto Sans", sans-serif; paint-order: stroke; stroke: #fff; stroke-opacity: 0.7; stroke-width: 6; stroke-linejoin: round; }
.label-road { font-size: 25px; fill: #222; }
.label-town { font-size: 43px; fill: #333; text-anchor: middle; }
.label-air { font-size: 32px; font-style: italic; fill: #8461c4; text-anchor: middle; }
.shield { fill: #f8dcbc; stroke: #d9ae85; stroke-width: 3; }
.map-canvas .label-shield { font-size: 33px; font-weight: 500; fill: #5a4632; stroke: none; text-anchor: middle; }
.pins { fill: #2563eb; stroke: #fff; stroke-width: 5; }
```
